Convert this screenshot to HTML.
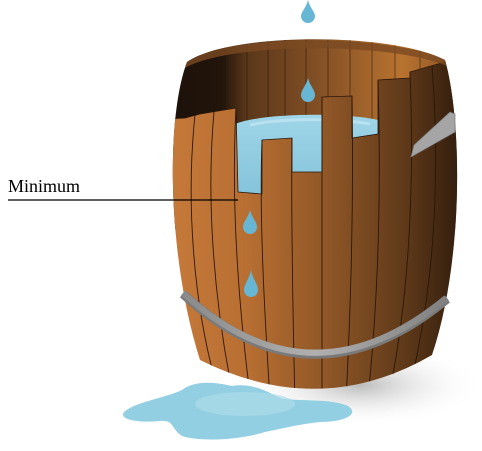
<!DOCTYPE html>
<html><head><style>
html,body{margin:0;padding:0;background:#fff;}
svg{display:block;}
.lbl{position:absolute;left:8px;top:175px;font-family:"Liberation Serif","Times New Roman","DejaVu Serif",serif;font-size:18px;line-height:22px;color:#000;}
</style></head><body>
<div style="position:relative;width:482px;height:451px;">
<svg width="482" height="451" viewBox="0 0 482 451" xmlns="http://www.w3.org/2000/svg">
<defs>
<clipPath id="sil"><path d="M187,62 C230,32 392,32 445,60 C462,120 464,260 432,355 Q320,420 200,360 C168,260 165,120 187,62 Z"/></clipPath>
<linearGradient id="front" x1="0" x2="1" y1="0" y2="0">
<stop offset="0" stop-color="#c97c3c"/><stop offset="0.3" stop-color="#b86f32"/>
<stop offset="0.55" stop-color="#905727"/><stop offset="0.8" stop-color="#5e3919"/><stop offset="1" stop-color="#2a180b"/>
</linearGradient>
<linearGradient id="back" x1="0" x2="1" y1="0" y2="0">
<stop offset="0" stop-color="#1b1009"/><stop offset="0.2" stop-color="#22150b"/><stop offset="0.28" stop-color="#5a371a"/>
<stop offset="0.55" stop-color="#8a5427"/><stop offset="0.78" stop-color="#b8732f"/><stop offset="0.9" stop-color="#9a5e2a"/><stop offset="1" stop-color="#3a2210"/>
</linearGradient>
<linearGradient id="water" x1="0" x2="0" y1="0" y2="1">
<stop offset="0" stop-color="#9fd5e8"/><stop offset="1" stop-color="#7fc0d8"/>
</linearGradient>
<linearGradient id="hoop" x1="0" x2="1"><stop offset="0" stop-color="#8a8a8a"/><stop offset="0.5" stop-color="#b0b0b0"/><stop offset="1" stop-color="#808080"/></linearGradient>
<radialGradient id="shadow" cx="0.5" cy="0.5" r="0.5"><stop offset="0" stop-color="#aaa" stop-opacity="0.8"/><stop offset="1" stop-color="#fff" stop-opacity="0"/></radialGradient>
</defs>
<ellipse cx="360" cy="385" rx="125" ry="42" fill="url(#shadow)"/>
<path d="M124,412 C135,402 165,398 182,390 C195,380 215,382 232,386 C250,383 265,390 280,398 C300,402 330,398 348,406 C360,414 345,422 320,422 C300,424 285,428 265,432 C240,440 200,442 182,436 C170,428 175,420 160,421 C140,423 118,420 124,412 Z" fill="#92cfe2"/>
<ellipse cx="245" cy="404" rx="50" ry="12" fill="#aedcea" opacity="0.7"/>
<g clip-path="url(#sil)">
<rect x="160" y="30" width="310" height="200" fill="url(#back)"/>
<g stroke="#1a0e06" stroke-width="0.8" opacity="0.6">
<line x1="205" y1="40" x2="205" y2="200"/><line x1="225" y1="40" x2="225" y2="200"/><line x1="247" y1="40" x2="247" y2="200"/><line x1="268" y1="40" x2="268" y2="200"/><line x1="285" y1="40" x2="285" y2="200"/><line x1="306" y1="40" x2="306" y2="200"/><line x1="328" y1="40" x2="328" y2="200"/><line x1="350" y1="40" x2="350" y2="200"/><line x1="372" y1="40" x2="372" y2="200"/><line x1="395" y1="40" x2="395" y2="200"/><line x1="420" y1="40" x2="420" y2="200"/>
</g>
<path d="M235,124 C265,112 355,112 386,122 L386,210 L235,210 Z" fill="url(#water)"/>
<path d="M250,125 C280,118 340,118 370,124" stroke="#c4e7f2" stroke-width="3" fill="none" opacity="0.7"/>
<path d="M150,120 L185,118 L200,114 L236,108 L238,192 L262,194 L262,140 L292,138 L292,172 L322,172 L322,97 L352,96 L352,138 L378,134 L378,80 L410,78 L410,72 L445,62 L470,60 L470,440 L150,440 Z" fill="url(#front)" stroke="#2a170a" stroke-width="0.8"/>
<g stroke="#2a170a" stroke-width="0.9" fill="none">
<path d="M195,115 C186,200 193,300 215,380"/><path d="M214,112 C206,200 214,300 232,390"/><path d="M236,108 C231,200 238,300 250,395"/>
<path d="M262,140 C259,220 265,320 270,400"/><path d="M292,138 C291,220 293,320 295,404"/><path d="M322,97 C322,220 322,320 322,404"/>
<path d="M352,96 C354,220 350,320 346,402"/><path d="M378,80 C382,220 376,320 368,398"/><path d="M410,72 C416,220 404,320 390,390"/><path d="M432,66 C442,200 430,300 412,378"/>
</g>
<path d="M185,60 C230,34 392,34 447,60 L447,66 C392,42 230,42 185,68 Z" fill="#7a4a22" opacity="0.8"/>
</g>
<path d="M183,294 Q310,412 447,299" stroke="#7a7a7a" stroke-width="9" fill="none"/>
<path d="M183,293 Q310,410 447,298" stroke="url(#hoop)" stroke-width="6" fill="none"/>
<path d="M411,157 L414,145 L450,112 L455,114 L455,132 Z" fill="#a5a5a5" stroke="#777" stroke-width="0.7"/>
<g fill="#66b6d4">
<path d="M308,0 C310,8 315,12 315,16 A7,7 0 0 1 301,16 C301,12 306,8 308,0 Z"/>
<path d="M308,78 C310,86 315,90 315,95 A7,7 0 0 1 301,95 C301,90 306,86 308,78 Z"/>
<path d="M250,210 C252,218 257,222 257,227 A7,7 0 0 1 243,227 C243,222 248,218 250,210 Z"/>
<path d="M251,270 C253,280 258,284 258,290 A7,7 0 0 1 244,290 C244,284 249,280 251,270 Z"/>
</g>
<line x1="8" y1="200" x2="238" y2="200" stroke="#000" stroke-width="1.2"/>
</svg>
<div class="lbl">Minimum</div>
</div>
</body></html>
